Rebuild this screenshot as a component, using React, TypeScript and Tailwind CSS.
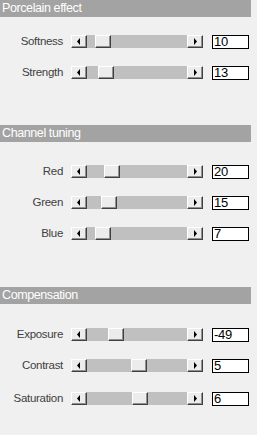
import React from 'react';

// 섹션/슬라이더 데이터
const sections = [
  {
    title: 'Porcelain effect',
    top: 'mt-[18px]',
    rows: [
      { label: 'Softness', thumb: 8, value: '10', gap: 'mb-[18px]' },
      { label: 'Strength', thumb: 11, value: '13', gap: 'mb-0' },
    ],
    after: 'h-[46px]',
  },
  {
    title: 'Channel tuning',
    top: 'mt-[23px]',
    rows: [
      { label: 'Red', thumb: 17, value: '20', gap: 'mb-[18px]' },
      { label: 'Green', thumb: 14, value: '15', gap: 'mb-[18px]' },
      { label: 'Blue', thumb: 8, value: '7', gap: 'mb-0' },
    ],
    after: 'h-[47px]',
  },
  {
    title: 'Compensation',
    top: 'mt-[24px]',
    rows: [
      { label: 'Exposure', thumb: 21, value: '-49', gap: 'mb-[18px]' },
      { label: 'Contrast', thumb: 44, value: '5', gap: 'mb-[20px]' },
      { label: 'Saturation', thumb: 45, value: '6', gap: 'mb-0' },
    ],
    after: 'h-[30px]',
  },
];

const btn =
  'w-[16px] h-[13px] flex items-center justify-center bg-[#ececec] border border-t-white border-l-white border-b-[#404040] border-r-[#404040] shadow-[inset_-1px_-1px_0_#909090]';

const Arrow = ({ dir }: { dir: 'left' | 'right' }) => (
  <svg width="4" height="7" viewBox="0 0 4 7">
    {dir === 'left' ? (
      <path d="M3 0 L3 7 L0 3.5 Z" fill="#000" />
    ) : (
      <path d="M1 0 L1 7 L4 3.5 Z" fill="#000" />
    )}
  </svg>
);

const Slider = ({ thumb }: { thumb: number }) => (
  <div className="w-[132px] h-[13px] flex bg-[#c0c0c0]">
    <div className={btn}>
      <Arrow dir="left" />
    </div>
    <div className="relative flex-1">
      <div className={`absolute top-0 ${btn}`} style={{ left: thumb }} />
    </div>
    <div className={btn}>
      <Arrow dir="right" />
    </div>
  </div>
);

export default function App() {
  return (
    <div className="w-[257px] h-[435px] bg-[#f0f0f0] overflow-hidden font-['Liberation_Sans',Arial,sans-serif]">
      {sections.map((s) => (
        <div key={s.title}>
          <div className="w-[251px] h-[17px] bg-[#a3a3a3] text-white text-[12.5px] leading-[17px] pl-[2px] tracking-[-0.4px]">
            {s.title}
          </div>
          <div className={s.top}>
            {s.rows.map((r) => (
              <div key={r.label} className={`flex items-center h-[13px] ${r.gap}`}>
                <div className="w-[64px] text-right pr-[1px] text-[11.5px] text-[#404040] tracking-[-0.3px] leading-[13px]">
                  {r.label}
                </div>
                <div className="ml-[7px]">
                  <Slider thumb={r.thumb} />
                </div>
                <div className="ml-[9px] w-[37px] h-[14px] mt-[1px] bg-white border border-black text-[13px] leading-[12px] text-black pl-[1px] tracking-[-0.3px]">
                  {r.value}
                </div>
              </div>
            ))}
          </div>
          <div className={s.after} />
        </div>
      ))}
    </div>
  );
}
